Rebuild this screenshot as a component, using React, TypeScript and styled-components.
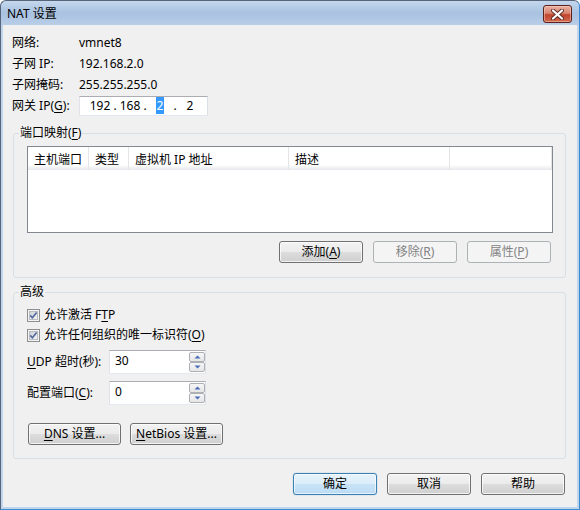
import React from "react";
import styled, { createGlobalStyle, css } from "styled-components";

const GlobalStyle = createGlobalStyle`
  html, body {
    margin: 0;
    padding: 0;
    background: #ffffff;
  }
  body {
    font-family: "Noto Sans", "Noto Sans CJK SC", sans-serif;
    font-size: 12px;
    color: #000;
  }
`;

const Window = styled.div`
  box-sizing: border-box;
  width: 580px;
  height: 510px;
  display: flex;
  flex-direction: column;
  padding: 0 2px 2px;
  border: 1px solid #56657a;
  border-right-color: #3b8ed4;
  border-bottom-color: #3b8ed4;
  border-radius: 6px 6px 0 0;
  background: linear-gradient(
    to bottom,
    #c4d7ed 0px,
    #a9c2e0 12px,
    #b8cde7 24px,
    #c0d4eb 25px
  );
`;

const TitleBar = styled.div`
  height: 24px;
  display: flex;
  align-items: flex-start;
  padding-left: 4px;
`;

const Title = styled.div`
  line-height: 16px;
  margin-top: 5px;
  font-size: 12px;
`;

const CloseButton = styled.div`
  margin: 4px 5px 0 auto;
  width: 29px;
  height: 18px;
  box-sizing: border-box;
  border: 1px solid #5b2019;
  border-radius: 3px;
  background: linear-gradient(#eab1a2 0%, #d98470 45%, #c1442d 55%, #d26a4f 100%);
  box-shadow: inset 0 0 0 1px rgba(255, 220, 210, 0.45);
  display: flex;
  align-items: center;
  justify-content: center;
`;

const Client = styled.div`
  flex: 1;
  display: flex;
  flex-direction: column;
  background: #f0f0f0;
`;

const InfoGrid = styled.div`
  display: grid;
  grid-template-columns: 67px auto;
  grid-template-rows: 20px 21px 21px 22px;
  align-items: center;
  margin: 8px 0 0 9px;
  line-height: 16px;
`;

const IpBox = styled.div`
  width: 129px;
  height: 20px;
  box-sizing: border-box;
  border: 1px solid;
  border-color: #abadb3 #dbdfe6 #e3e9ef #e2e3ea;
  background: #fff;
  display: flex;
  align-items: center;
  padding-left: 8px;
`;

const IpField = styled.span`
  width: 24px;
  text-align: center;
  line-height: 16px;
`;

const IpDot = styled.span`
  width: 6px;
  text-align: center;
`;

const Selected = styled.span`
  background: #3399ff;
  color: #fff;
  padding: 0 1px;
`;

const Group = styled.fieldset<{ $top: number; $pb: number }>`
  margin: ${(p) => p.$top}px 11px 0 10px;
  padding: 5px 12px ${(p) => p.$pb}px 13px;
  border: 1px solid #d5dfe5;
  border-radius: 3px;
  min-width: 0;
`;

const Legend = styled.legend`
  margin-left: -8px;
  padding: 0 1px;
  line-height: 16px;
  font-size: 12px;
`;

const ListView = styled.div`
  height: 87px;
  box-sizing: border-box;
  border: 1px solid #828790;
  background: #fff;
`;

const ListHeader = styled.div`
  display: flex;
  height: 23px;
  background: linear-gradient(#ffffff 0%, #ffffff 78%, #f1f2f4 90%, #e6e8eb 100%);
`;

const HeaderCell = styled.div<{ $w?: number }>`
  ${(p) =>
    p.$w
      ? css`
          width: ${p.$w}px;
          flex: none;
        `
      : css`
          flex: 1;
        `}
  box-sizing: border-box;
  padding: 2px 0 0 6px;
  border-right: 1px solid #e5e5e5;
  display: flex;
  align-items: center;
  line-height: 16px;
`;

const ButtonRow = styled.div<{ $top: number; $justify?: string }>`
  display: flex;
  justify-content: ${(p) => p.$justify || "flex-end"};
  gap: 10px;
  margin-top: ${(p) => p.$top}px;
`;

const Button = styled.button<{ $primary?: boolean; $w?: number }>`
  width: ${(p) => p.$w || 84}px;
  height: 22px;
  box-sizing: border-box;
  padding: 0;
  font-family: inherit;
  font-size: 12px;
  line-height: 16px;
  color: #000;
  border: 1px solid #707070;
  border-radius: 3px;
  background: linear-gradient(#f2f2f2 0%, #ebebeb 50%, #dddddd 51%, #cfcfcf 100%);
  box-shadow: inset 0 0 0 1px rgba(255, 255, 255, 0.75);

  ${(p) =>
    p.$primary &&
    css`
      border-color: #3c7fb1;
      background: linear-gradient(#e8f3fc 0%, #dbedfa 50%, #c8e3f7 51%, #bcdcf4 100%);
      box-shadow: inset 0 0 0 1px rgba(255, 255, 255, 0.6), 0 0 1px #58a7e0;
    `}

  &:disabled {
    border-color: #adb2b5;
    background: #f4f4f4;
    color: #838383;
    box-shadow: none;
  }
`;

const CheckRow = styled.label`
  display: flex;
  align-items: center;
  gap: 4px;
  height: 20px;
  line-height: 16px;
`;

const FieldRow = styled.div<{ $top: number }>`
  display: flex;
  align-items: center;
  margin-top: ${(p) => p.$top}px;
`;

const FieldLabel = styled.div`
  width: 82px;
  line-height: 16px;
`;

const SpinBox = styled.div`
  display: flex;
  width: 97px;
  height: 24px;
  box-sizing: border-box;
  border: 1px solid;
  border-color: #abadb3 #dbdfe6 #e3e9ef #e2e3ea;
  background: #fff;
`;

const SpinValue = styled.div`
  flex: 1;
  padding: 2px 0 0 5px;
  line-height: 16px;
`;

const SpinButtons = styled.div`
  display: flex;
  flex-direction: column;
  width: 16px;
  padding: 1px 0;
`;

const SpinButton = styled.div`
  flex: 1;
  box-sizing: border-box;
  border: 1px solid #acb0b5;
  border-radius: 2px;
  background: linear-gradient(#f6f6f6, #e6e6e6);
  display: flex;
  align-items: center;
  justify-content: center;
`;

const Footer = styled.div`
  display: flex;
  justify-content: flex-end;
  gap: 10px;
  margin: 14px 12px 0 0;
`;

const Key = styled.u`
  text-decoration: underline;
  text-underline-offset: 2px;
`;

const CheckBox = () => (
  <svg width="13" height="13" viewBox="0 0 13 13">
    <defs>
      <linearGradient id="cbg" x1="0" y1="0" x2="1" y2="1">
        <stop offset="0" stopColor="#cbcfd5" />
        <stop offset="1" stopColor="#f7f7f7" />
      </linearGradient>
    </defs>
    <rect x="0.5" y="0.5" width="12" height="12" fill="#f4f4f4" stroke="#8e8f8f" />
    <rect x="2.5" y="2.5" width="8" height="8" fill="url(#cbg)" stroke="#b9bcc2" />
    <path d="M3.3 6.4 L5.4 8.8 L9.6 3.4" fill="none" stroke="#52679c" strokeWidth="1.6" />
  </svg>
);

const Arrow = ({ up }: { up?: boolean }) => (
  <svg width="7" height="4" viewBox="0 0 7 4">
    <path d={up ? "M0.5 3.5 L3.5 0.5 L6.5 3.5 Z" : "M0.5 0.5 L3.5 3.5 L6.5 0.5 Z"} fill="#4a6cb8" />
  </svg>
);

const Spin = ({ value }: { value: string }) => (
  <SpinBox>
    <SpinValue>{value}</SpinValue>
    <SpinButtons>
      <SpinButton>
        <Arrow up />
      </SpinButton>
      <SpinButton>
        <Arrow />
      </SpinButton>
    </SpinButtons>
  </SpinBox>
);

export default function App() {
  return (
    <>
      <GlobalStyle />
      <Window>
        <TitleBar>
          <Title>NAT 设置</Title>
          <CloseButton>
            <svg width="13" height="11" viewBox="0 0 13 11">
              <path d="M2 1.5 L11 9.5 M11 1.5 L2 9.5" stroke="#5a2a25" strokeWidth="4" strokeLinecap="round" />
              <path d="M2 1.5 L11 9.5 M11 1.5 L2 9.5" stroke="#ffffff" strokeWidth="2.2" strokeLinecap="round" />
            </svg>
          </CloseButton>
        </TitleBar>
        <Client>
          <InfoGrid>
            <span>网络:</span>
            <span>vmnet8</span>
            <span>子网 IP:</span>
            <span>192.168.2.0</span>
            <span>子网掩码:</span>
            <span>255.255.255.0</span>
            <span>
              网关 IP(<Key>G</Key>):
            </span>
            <IpBox>
              <IpField>192</IpField>
              <IpDot>.</IpDot>
              <IpField>168</IpField>
              <IpDot>.</IpDot>
              <IpField>
                <Selected>2</Selected>
              </IpField>
              <IpDot>.</IpDot>
              <IpField>2</IpField>
            </IpBox>
          </InfoGrid>

          <Group $top={8} $pb={14}>
            <Legend>
              端口映射(<Key>F</Key>)
            </Legend>
            <ListView>
              <ListHeader>
                <HeaderCell $w={61}>主机端口</HeaderCell>
                <HeaderCell $w={40}>类型</HeaderCell>
                <HeaderCell $w={160}>虚拟机 IP 地址</HeaderCell>
                <HeaderCell $w={161}>描述</HeaderCell>
                <HeaderCell />
              </ListHeader>
            </ListView>
            <ButtonRow $top={8}>
              <Button>
                添加(<Key>A</Key>)
              </Button>
              <Button disabled>
                移除(<Key>R</Key>)
              </Button>
              <Button disabled style={{ marginRight: 2 }}>
                属性(<Key>P</Key>)
              </Button>
            </ButtonRow>
          </Group>

          <Group $top={6} $pb={13}>
            <Legend>高级</Legend>
            <CheckRow>
              <CheckBox />
              <span>
                允许激活 F<Key>T</Key>P
              </span>
            </CheckRow>
            <CheckRow>
              <CheckBox />
              <span>
                允许任何组织的唯一标识符(<Key>O</Key>)
              </span>
            </CheckRow>
            <FieldRow $top={5}>
              <FieldLabel>
                <Key>U</Key>DP 超时(秒):
              </FieldLabel>
              <Spin value="30" />
            </FieldRow>
            <FieldRow $top={7}>
              <FieldLabel>
                配置端口(<Key>C</Key>):
              </FieldLabel>
              <Spin value="0" />
            </FieldRow>
            <ButtonRow $top={18} $justify="flex-start" style={{ gap: 9, marginLeft: 1 }}>
              <Button $w={93}>
                <Key>D</Key>NS 设置...
              </Button>
              <Button $w={93}>
                <Key>N</Key>etBios 设置...
              </Button>
            </ButtonRow>
          </Group>

          <Footer>
            <Button $primary>确定</Button>
            <Button>取消</Button>
            <Button>帮助</Button>
          </Footer>
        </Client>
      </Window>
    </>
  );
}
